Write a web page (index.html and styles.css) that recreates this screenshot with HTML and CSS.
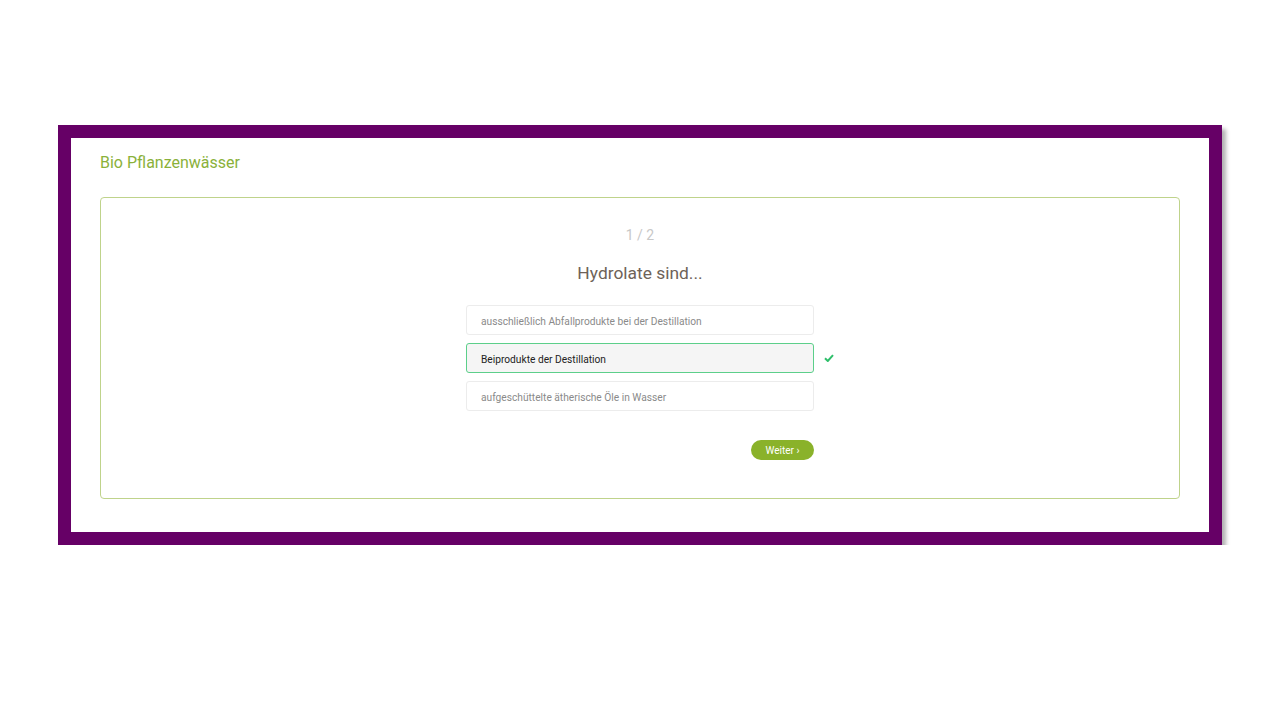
FILE: index.html
```html
<!DOCTYPE html>
<html lang="de">
<head>
    <meta charset="UTF-8">
    <meta name="viewport" content="width=device-width, initial-scale=1.0">
    <title>Bio Pflanzenwässer Quiz</title>
    <link rel="stylesheet" href="styles.css">
</head>
<body>

<div class="frame">
    <h1 class="title">Bio Pflanzenwässer</h1>

    <div class="quiz">
        <div class="counter">1 / 2</div>
        <h2 class="question">Hydrolate sind...</h2>

        <div class="answers">
            <div class="answer">ausschließlich Abfallprodukte bei der Destillation</div>
            <div class="answer selected">
                Beiprodukte der Destillation
                <svg class="check" width="10" height="8" viewBox="0 0 10 8">
                    <path d="M1 4.2 L3.8 7 L9 1.2" fill="none" stroke="#2fbf6b" stroke-width="2"/>
                </svg>
            </div>
            <div class="answer">aufgeschüttelte ätherische Öle in Wasser</div>

            <div class="actions">
                <button class="next">Weiter ›</button>
            </div>
        </div>
    </div>
</div>

</body>
</html>
```

FILE: styles.css
```css
/* Global */
body {
    margin: 0;
    background: #fff;
    font-family: 'Roboto', 'Liberation Sans', sans-serif;
}

/* Purple frame */
.frame {
    width: 1138px;
    margin: 125px 0 0 58px;
    border: 13px solid #660066;
    background: #fff;
    padding: 14px 0 33px;
    box-shadow: 4px 4px 4px rgba(0, 0, 0, 0.3);
}

.title {
    margin: 0 0 23px 29px;
    font-size: 16px;
    font-weight: normal;
    color: #8ab13a;
    line-height: 22px;
}

/* Quiz card */
.quiz {
    width: 1078px;
    margin-left: 29px;
    height: 300px;
    border: 1px solid #bfd38b;
    border-radius: 4px;
}

.counter {
    margin-top: 27px;
    text-align: center;
    font-size: 14px;
    color: #c8c8c8;
    line-height: 20px;
}

.question {
    margin: 16px 0 20px;
    text-align: center;
    font-size: 17.4px;
    font-weight: normal;
    color: #6e6258;
    line-height: 24px;
}

.answers {
    width: 348px;
    margin: 0 auto;
}

.answer {
    position: relative;
    box-sizing: border-box;
    height: 30px;
    margin-bottom: 8px;
    padding: 0 14px;
    border: 1px solid #ececec;
    border-radius: 3px;
    font-size: 10.2px;
    line-height: 32px;
    color: #8a8a8a;
}

.answer.selected {
    background: #f5f5f5;
    border-color: #5ccf8a;
    color: #222;
}

.check {
    position: absolute;
    right: -21px;
    top: 10px;
}

.actions {
    display: flex;
    justify-content: flex-end;
    margin-top: 29px;
}

.next {
    height: 20px;
    width: 63px;
    padding: 0;
    border: none;
    border-radius: 10px;
    background: #8ab22a;
    color: #fff;
    font-family: inherit;
    font-size: 10px;
}
```
